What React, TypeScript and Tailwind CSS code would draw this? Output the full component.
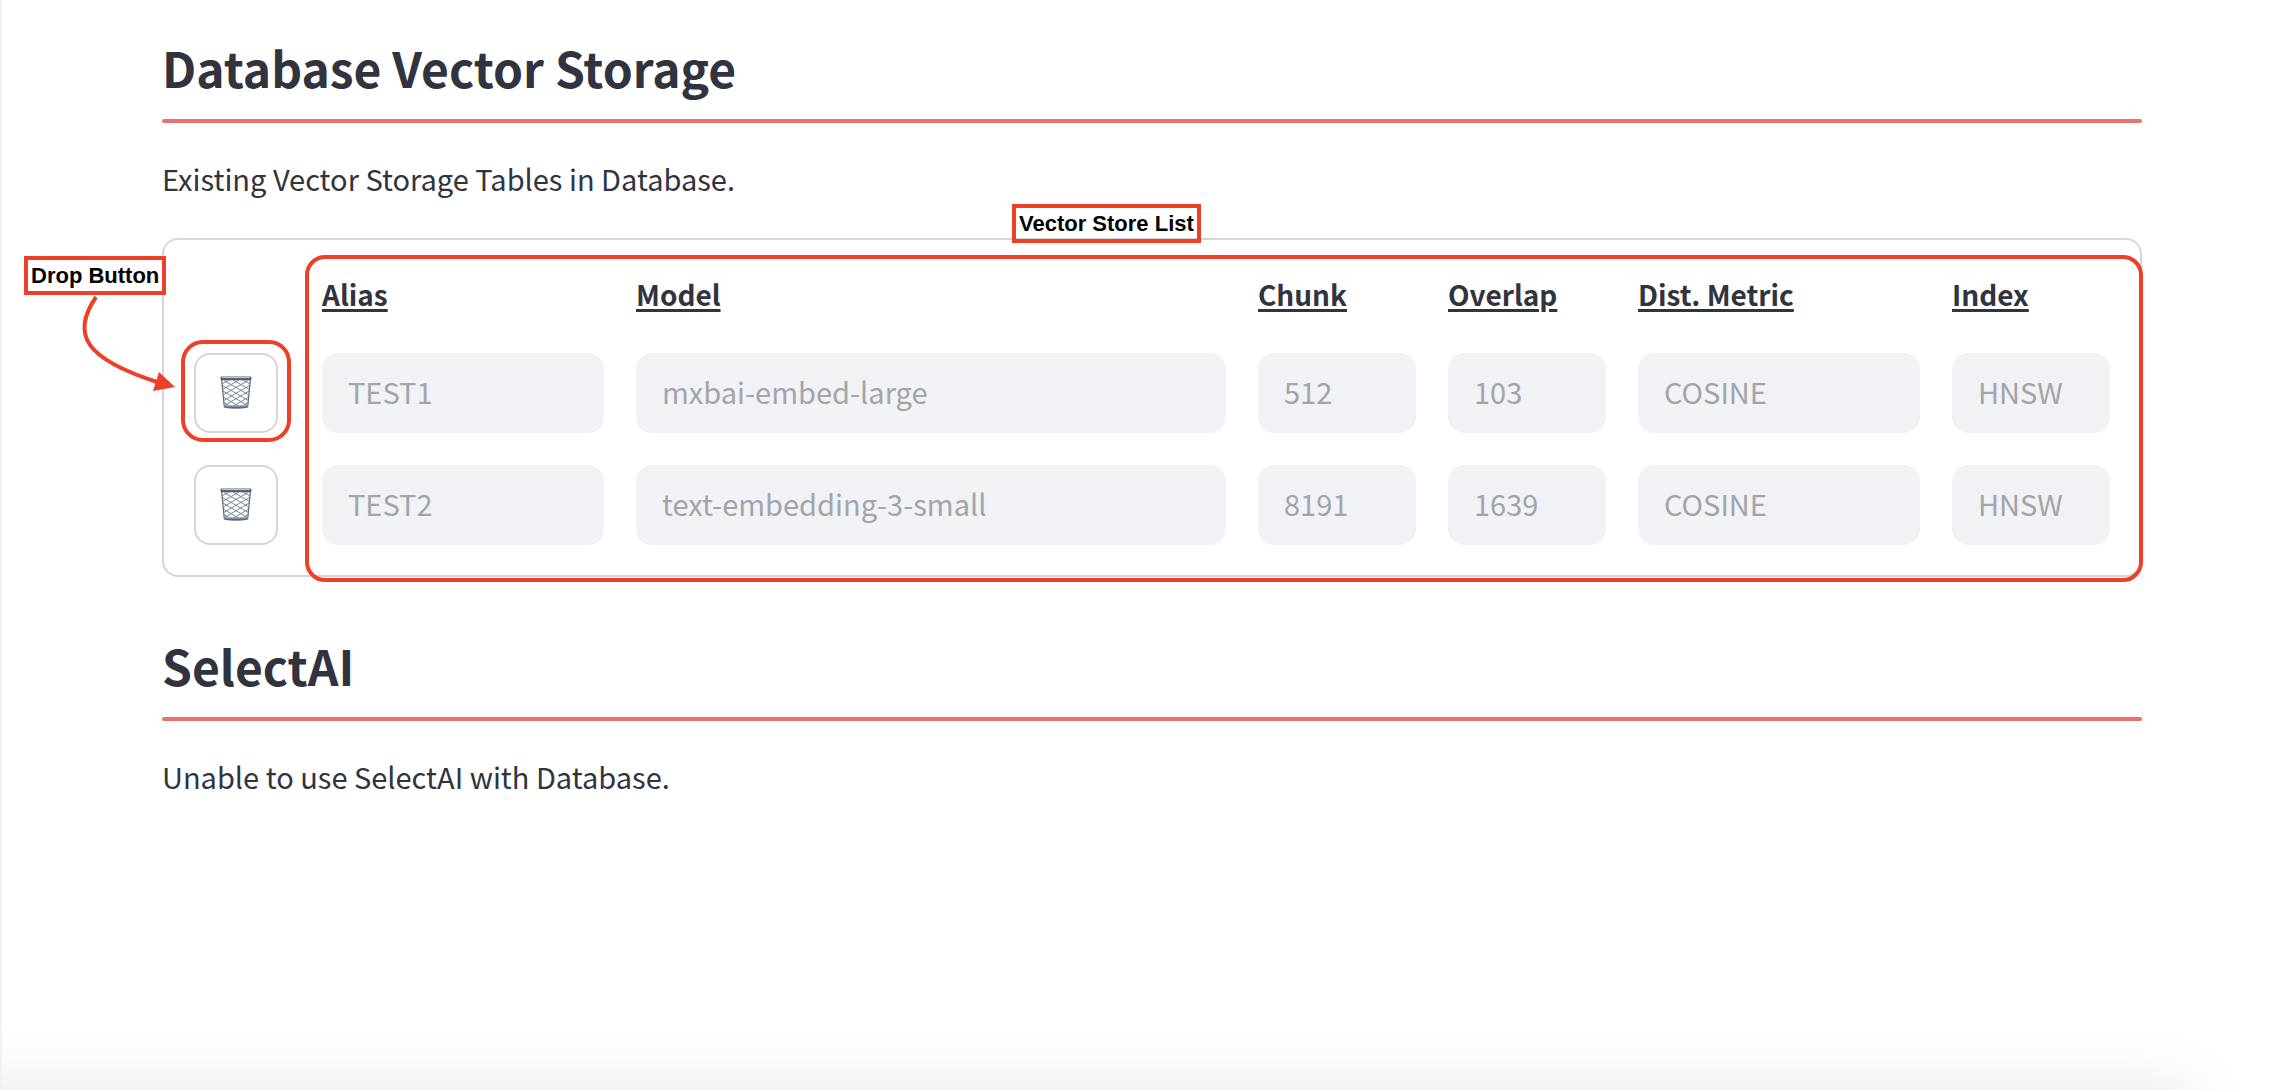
import React from "react";

const columns = ["Alias", "Model", "Chunk", "Overlap", "Dist. Metric", "Index"];

const stores = [
  ["TEST1", "mxbai-embed-large", "512", "103", "COSINE", "HNSW"],
  ["TEST2", "text-embedding-3-small", "8191", "1639", "COSINE", "HNSW"],
];

function TrashIcon() {
  return (
    <svg width="32" height="34" viewBox="0 0 32 34" fill="none" aria-hidden="true">
      <path d="M1.500 3 L4.300 31 H27.700 L30.500 3 Z" fill="#fcfdfe" />
      <g stroke="#727c8a" strokeWidth="0.9">
        <path d="M2 8 L9 4 M2.500 13.500 L19 4 M3 19 L28 4.500 M3.500 24.500 L29.500 9.500 M4.500 29.500 L29 15 M12 31 L28.500 21 M21 31 L28 26.500" />
        <path d="M30 8 L23 4 M29.500 13.500 L13 4 M29 19 L4 4.500 M28.500 24.500 L2.500 9.500 M27.500 29.500 L3 15 M20 31 L3.500 21 M11 31 L4 26.500" />
      </g>
      <path d="M1.600 3.500 L4.300 31 M30.400 3.500 L27.700 31" stroke="#5f6a7a" strokeWidth="1.200" />
      <path d="M4.300 29.500 H27.700 V31.800 Q16 33.600 4.300 31.800 Z" fill="#5c6a80" />
      <path d="M5.200 30 H26.800" stroke="#a9b9d0" strokeWidth="1" />
      <rect x="0.500" y="0.500" width="31" height="3.800" rx="1.400" fill="#525b68" />
      <path d="M2 1.400 H30" stroke="#bcc6d3" strokeWidth="1.400" />
    </svg>
  );
}

function Section({ title, text, children }: { title: string; text: string; children?: React.ReactNode }) {
  return (
    <section>
      <h2 className="text-[48px] leading-[60px] font-semibold">{title}</h2>
      <hr className="mt-[22px] h-1 rounded-full border-0 bg-[#ec7070]" />
      <p className="mt-[30px] text-[29px] leading-[51px]">{text}</p>
      {children}
    </section>
  );
}

function StoreTable() {
  return (
    <table className="grid grid-cols-[96fr_282fr_590fr_158fr_158fr_282fr_158fr] gap-8 rounded-2xl border-2 border-[#d6d6d8] p-[30px]">
      <thead className="contents">
        <tr className="contents">
          <td />
          {columns.map((name) => (
            <th
              key={name}
              id={name}
              scope="col"
              className="p-0 pb-[3px] text-left text-[28px] leading-[48px] font-semibold whitespace-nowrap underline decoration-[3px] underline-offset-[3px]"
            >
              {name}
            </th>
          ))}
        </tr>
      </thead>
      <tbody className="contents">
        {stores.map((store, row) => (
          <tr key={store[0]} className="contents">
            <td className="relative p-0">
              <button
                type="button"
                aria-label={`Drop ${store[0]}`}
                className="flex h-20 w-[84px] items-center justify-center rounded-2xl border-2 border-[#d6d6d8] bg-white"
              >
                <TrashIcon />
              </button>
              {row === 0 && (
                <span className="pointer-events-none absolute -top-[13px] -left-[13px] h-[102px] w-[110px] rounded-[22px] border-4 border-[#ed4026]" />
              )}
            </td>
            {store.map((value, i) => (
              <td key={columns[i]} className="min-w-0 p-0">
                <input
                  type="text"
                  disabled
                  value={value}
                  aria-labelledby={columns[i]}
                  className="h-20 w-full rounded-2xl bg-[#f0f2f6] px-[26px] pb-1 text-[29px] text-[#a3a4a8]"
                />
              </td>
            ))}
          </tr>
        ))}
      </tbody>
    </table>
  );
}

function Note({ children }: { children: React.ReactNode }) {
  return (
    <span className="block border-4 border-[#ed4026] px-[3px] font-['Liberation_Sans',sans-serif] text-[22px] leading-[31px] font-bold whitespace-nowrap text-black">
      {children}
    </span>
  );
}

export default function App() {
  return (
    <div className="relative min-h-screen overflow-hidden border-l-2 border-[#f0f2f6] bg-white font-['Noto_Sans_CJK_SC',sans-serif] text-[#31333f]">
      <main className="mr-[138px] ml-40 pt-[37px]">
        <Section title="Database Vector Storage" text="Existing Vector Storage Tables in Database.">
          <div className="relative mt-[34px]">
            <StoreTable />
            <div className="pointer-events-none absolute top-[17px] -right-px -bottom-[5px] left-[143px] rounded-[20px] border-4 border-[#ed4026]" />
            <div className="absolute -top-[34px] left-[850px]">
              <Note>Vector Store List</Note>
            </div>
            <div className="absolute top-[18px] -left-[138px]">
              <Note>Drop Button</Note>
            </div>
            <svg
              className="absolute top-[56px] -left-[90px]"
              width="110"
              height="104"
              viewBox="72 294 110 104"
              fill="none"
              aria-hidden="true"
            >
              <path d="M96 297 C70 335 86 359 157 382" stroke="#ed4026" strokeWidth="4" />
              <path d="M159 372 L175 387 L153 391 Z" fill="#ed4026" />
            </svg>
          </div>
        </Section>
        <div className="pt-[58px]">
          <Section title="SelectAI" text="Unable to use SelectAI with Database." />
        </div>
      </main>
      <div className="pointer-events-none absolute top-full right-[90px] -left-40 h-40 shadow-[0_0_70px_rgba(0,0,0,0.1)]" />
    </div>
  );
}
